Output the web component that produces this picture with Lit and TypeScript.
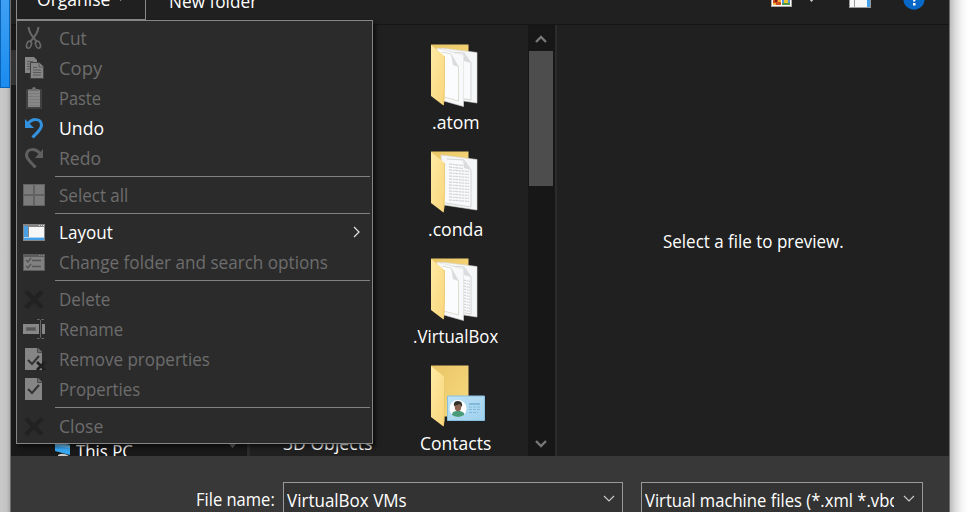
import { LitElement, html, css, svg, nothing } from "lit";
import { customElement, property } from "lit/decorators.js";

/** A single line of text condensed or widened to an exact advance width. */
@customElement("fit-text")
class FitText extends LitElement {
  @property() text = "";
  @property({ type: Number }) width = 0;
  static styles = css`
    :host { display: block; flex: none; height: 24px; line-height: 24px; white-space: pre; }
    span { display: inline-block; transform-origin: 0 50%; }
  `;
  render() { return html`<span>${this.text}</span>`; }
  updated() {
    const s = this.renderRoot.querySelector("span") as HTMLElement;
    this.style.width = this.width + "px";
    s.style.transform = `scaleX(${this.width / s.offsetWidth})`;
  }
}

const icons: Record<string, unknown> = {
  cut: svg`<g fill="none" stroke="#686868" stroke-width="1.6"><path d="M5.500 0 C6 5 8 8 14 15M15.500 0 C15 5 13 8 7 15" stroke-width="2"/><ellipse cx="6" cy="17.700" rx="2.300" ry="3.600" transform="rotate(20 6 17.700)"/><ellipse cx="15" cy="17.700" rx="2.300" ry="3.600" transform="rotate(-20 15 17.700)"/></g>`,
  copy: svg`<path d="M2 0h9l3 3v13H2z" fill="#858585"/><path d="M4 4.500h6M4 7h4M4 9.500h4M4 12h4" stroke="#5a5a5a"/><path d="M7.500 5.500h9l4 4v12h-13z" fill="#858585" stroke="#444"/><path d="M16 6v4h4M10 10.500h4M10 13h8M10 15.500h8M10 18h8" fill="none" stroke="#5a5a5a"/>`,
  paste: svg`<path d="M3 2h16v20H3z" fill="#404040"/><path d="M5 3h12v17H5z" fill="#888"/><path d="M5 6.500h12M5 9.500h12M5 12.500h12M5 15.500h12M5 18.500h12" stroke="#7b7b7b"/><path d="M6 4V2h3a2 2 0 0 1 4 0h3v2z" fill="#6d6d6d"/>`,
  undo: svg`<path d="M2 2v9h9z" fill="#3391dd"/><path d="M5 7C9 1 18 1 18.500 8C18.800 12 14 16 9.500 20.500" fill="none" stroke="#3391dd" stroke-width="3"/>`,
  redo: svg`<path d="M20 2v9h-8z" fill="#606060"/><path d="M17 7C13 1 4 1 3.500 8C3.200 12 8 15 12.500 20.500" fill="none" stroke="#606060" stroke-width="3"/>`,
  select: svg`<path d="M0 0h22v22H0z" fill="#626262"/><path d="M1 1h9v9H1zM12 1h9v9h-9zM1 12h9v9H1zM12 12h9v9h-9z" fill="#7b7b7b"/>`,
  layout: svg`<path d="M0 3h22v17H0z" fill="#858585"/><path d="M1 5h4v11H1zM1 17h20v2H1z" fill="#479fe6"/><path d="M6 6h15v10H6z" fill="#f7f7f7"/><path d="M1 16.500h20" stroke="#abd4f5"/><path d="M16 4.500h1M18 4.500h1M20 4.500h1" stroke="#ddd"/>`,
  options: svg`<path d="M0 3h22v17H0z" fill="#5b5b5b"/><path d="M1 6h20v13H1z" fill="#818181"/><path d="M3 9l2 2 3-4M3 15l2 2 3-4M9 9.500h9M9 15.500h9" fill="none" stroke="#555" stroke-width="1.400"/><path d="M16 4.500h1M18 4.500h1M20 4.500h1" stroke="#888"/>`,
  cross: svg`<path d="M3 3.500L19 19.500M19 3.500L3 19.500" stroke="#222" stroke-width="4.500"/>`,
  rename: svg`<path d="M0 6h22v10H0z" fill="#878787"/><path d="M3.500 9.500h9v3h-9z" fill="#575757" stroke="#656565"/><path d="M17.500 3v17" stroke="#2b2b2b" stroke-width="3"/><path d="M17.500 2v17M14 1.500h2.500l1 1 1-1H21M14 20.500h2.500l1-1 1 1H21" fill="none" stroke="#656565"/>`,
  remove: svg`<path d="M2 0h13l4 4v18H2z" fill="#858585"/><path d="M14.500 0v4.500H19" fill="#686868" stroke="#4a4a4a"/><path d="M5 12l4 4 7-8" fill="none" stroke="#333" stroke-width="2"/><path d="M14 14l8 8M22 14l-8 8" stroke="#202020" stroke-width="2.600"/>`,
  properties: svg`<path d="M2 0h13l4 4v18H2z" fill="#858585"/><path d="M14.500 0v4.500H19" fill="#686868" stroke="#4a4a4a"/><path d="M5 11l4 4 7-8" fill="none" stroke="#333" stroke-width="2"/>`,
};

interface Item { icon: string; text: string; w: number; on?: boolean; sub?: boolean }
const menu: (Item | null)[] = [
  { icon: "cut", text: "Cut", w: 28 },
  { icon: "copy", text: "Copy", w: 43 },
  { icon: "paste", text: "Paste", w: 42 },
  { icon: "undo", text: "Undo", w: 45, on: true },
  { icon: "redo", text: "Redo", w: 42 },
  null,
  { icon: "select", text: "Select all", w: 69 },
  null,
  { icon: "layout", text: "Layout", w: 54, on: true, sub: true },
  { icon: "options", text: "Change folder and search options", w: 269 },
  null,
  { icon: "cross", text: "Delete", w: 51 },
  { icon: "rename", text: "Rename", w: 64 },
  { icon: "remove", text: "Remove properties", w: 151 },
  { icon: "properties", text: "Properties", w: 81 },
  null,
  { icon: "cross", text: "Close", w: 44 },
];

const folders = [
  { kind: "pages", text: ".atom", w: 48 },
  { kind: "text", text: ".conda", w: 55 },
  { kind: "mixed", text: ".VirtualBox", w: 85 },
  { kind: "contact", text: "Contacts", w: 71 },
];

const lines = (x: number, y: number, w: number, n: number) =>
  Array.from({ length: n }, (_, i) =>
    svg`<path d=${`M${x} ${y + i * 3}l${w} 1.500`} stroke="#d3d6d8" stroke-width="1.300" stroke-dasharray="3 .7 2 .5"/>`);

function folder(kind: string) {
  const contact = kind === "contact";
  return html`<svg class="folder" width="56" height="64" viewBox="0 0 56 64">
    <defs>
      <linearGradient id="back" x2="1" y2="1"><stop stop-color="#e9c566"/><stop offset="1" stop-color="#f8da80"/></linearGradient>
      <linearGradient id="flap" x2="1" y2="1"><stop stop-color="#ffeaa5"/><stop offset="1" stop-color="#f9d67a"/></linearGradient>
      <linearGradient id="card" x2="1" y2="1"><stop stop-color="#bfe3f5"/><stop offset="1" stop-color="#9dd0ee"/></linearGradient>
    </defs>
    <path d="M3 .5h37.500v${contact ? 51 : 20}H3z" fill="url(#back)"/>
    ${contact ? nothing : svg`
      <path d="M13 4l36 4.500V59L16 54z" fill="#f5f6f7" stroke="#d5d5d2" stroke-width=".6"/>
      <path d="M19 8l17 1 7 10v37L17 52" fill="#f9fafb" stroke="#c9cac8" stroke-width=".8"/>
      <path d="M35 9l8 10-7-2z" fill="#d8dcdf"/>
      ${kind === "text" ? svg`${lines(21, 13, 14, 2)}${lines(21, 19, 20, 11)}` : nothing}
      ${kind === "mixed" ? lines(35, 22, 7, 11) : nothing}
      ${kind !== "text" ? svg`
        <path d="M9 4l26.500 7v51.500L16 57z" fill="#f8f9fb" stroke="#dededb" stroke-width=".6"/>
        <path d="M14 8l9 2 7.500 13v34L16 53" fill="#fbfcfd" stroke="#d8d4c5" stroke-width=".8"/>
        <path d="M23 10l7.500 13-5.500-2z" fill="#d9dcdf"/>` : nothing}`}
    <path d="M3 1l13.500 11v43L15.500 61.500 3 52z" fill="url(#flap)"/>
    <path d="M16.500 12v30L15.500 61" fill="none" stroke="#e9c66c" stroke-width=".8"/>
    ${contact ? svg`
      <path d="M19.500 31h37V55.500h-37z" fill="url(#card)" stroke="#87bfe0"/>
      <circle cx="30" cy="43.500" r="8.500" fill="#fff"/>
      <path d="M24 50q0-4 5-4h3q5 1 4 4-6 4-12 0z" fill="#4a9c78"/>
      <ellipse cx="30" cy="41.500" rx="3.300" ry="4.700" fill="#8c6551"/>
      <path d="M26 41q-1-5 4-5 5 0 4 6l-2-3z" fill="#30302d"/>
      <path d="M41 39h11" stroke="#6aa9cc" stroke-width="1.300"/>
      <path d="M41 42h11M41 44.500h11M41 47.500h9" stroke="#7fbada" stroke-dasharray="3 1"/>` : nothing}
  </svg>`;
}

const chevron = (d: string, c = "#c8c8c8", w = 1.2) =>
  html`<svg width="14" height="10" viewBox="0 0 14 10"><path d=${d} fill="none" stroke=${c} stroke-width=${w}/></svg>`;

@customElement("app-root")
class AppRoot extends LitElement {
  static styles = css`
    :host { display: block; position: relative; width: 968px; height: 512px; overflow: hidden;
      color: #fff; font: 18px "Open Sans", "Noto Sans", sans-serif; background: #fff; }
    * { box-sizing: border-box; }
    svg { display: block; flex: none; }
    .desk { display: grid; grid-template-columns: 10px 940px 18px; height: 512px; }
    .left { background: linear-gradient(90deg, #c9c9c9, #c3c3c3 65%, #acacac); }
    .tile { height: 88px; background: linear-gradient(#3fa0f3, #1a8cf0); border: 1px solid #0864b8; border-top: 0; }
    .right { background: linear-gradient(90deg, #bdbdbd, #dcdcdc 30%, #f4f4f4 65%, #fff); }
    .window { height: 512px; overflow: hidden; border: solid #6c6c6c; border-width: 0 1px; background: #202020; }
    .toolbar { display: flex; align-items: center; height: 49px; margin-top: -24px; padding: 0 24px 0 5px; border-bottom: 1px solid #151515; }
    .organise { display: flex; align-items: center; gap: 7px; width: 130px; height: 42px; margin-top: -3px; padding-left: 20px; border: 1px solid #8a8a8a; }
    .new { margin-left: 23px; margin-top: 1px; }
    .tools { display: flex; align-items: center; margin-left: auto; }
    .view { margin-right: 16px; margin-top: -2px; } .drop { margin-right: 33px; } .pane { margin-right: 32px; margin-top: -2px; }
    .body { display: grid; grid-template-columns: 236px 281px 25px 4px 1fr; height: 431px; overflow: hidden; }
    .nav { display: flex; flex-direction: column; background: #191919; }
    .mark { height: 35px; margin-top: 25px; background: #333; }
    .pc { display: flex; align-items: center; height: 24px; margin-top: auto; margin-bottom: -7px; padding: 0 10px 0 41px; gap: 4px; }
    .pc .tri { margin-left: auto; margin-top: -10px; }
    .files { display: grid; grid-template-columns: 128px 128px; padding-left: 13.5px; border-left: 3px solid #2c2c2c; height: 431px; overflow: hidden; }
    .col { display: flex; flex-direction: column; padding-top: 19px; }
    .col.first { padding-top: 406px; align-items: center; }
    .cell { display: flex; flex-direction: column; align-items: center; height: 107px; flex: none; }
    .folder { height: 64px; margin-bottom: 2px; overflow: visible; }
    .scroll { display: flex; flex-direction: column; align-items: center; background: #171717; padding: 9px 0 7px; }
    .thumb { width: 24px; height: 135px; margin-top: 7px; margin-bottom: auto; background: #4d4d4d; }
    .split { border-left: 2px solid #171717; background: #2b2b2b; }
    .preview { display: flex; align-items: center; justify-content: center; padding-left: 1px; }
    .footer { display: flex; align-items: flex-start; height: 90px; padding: 26px 0 0 185px; background: #383838; }
    .name { margin-top: 5px; margin-right: 8px; }
    .combo { display: flex; align-items: center; justify-content: space-between; height: 36px; padding: 0 6px 0 3px; border: 1px solid #999; background: #333; width: 340px; }
    .combo.type { width: 282px; margin-left: 18px; }
    .clip { width: 249px; overflow: hidden; }
    .menu { position: absolute; left: 16px; top: 20px; width: 357px; height: 424px; padding: 3px 0 1px; background: #2b2b2b; border: 1px solid #858585; box-shadow: 3px 3px 4px #0008; }
    .item { display: flex; align-items: center; height: 30px; padding: 0 10px 0 6px; color: #6d6d6d; }
    .item.on { color: #fff; }
    .item fit-text { margin-left: 12.5px; margin-top: -2px; }
    .item .arrow { margin-left: auto; margin-top: -2px; }
    .sep { height: 7px; padding: 2px 2px 0 38px; }
    .sep i { display: block; height: 1px; background: #808080; }
  `;

  render() {
    return html`<div class="desk">
      <div class="left"><div class="tile"></div></div>
      <div class="window">
        <div class="toolbar">
          <div class="organise"><fit-text text="Organise" width="73"></fit-text>
            <svg width="8" height="6"><path d="M0 1h7L3.500 5z" fill="#aaa"/></svg></div>
          <fit-text class="new" text="New folder" width="88"></fit-text>
          <div class="tools">
            <svg class="view" width="21" height="16"><path d="M0 0h21v16H0z" fill="#aaa"/><path d="M1 1h19v14H1z" fill="#fff"/><path d="M2 2h8v12H2z" fill="#d14d22"/><path d="M11 2h8v12h-8z" fill="#5293e2"/><path d="M2 12h3v2H2zM7 8h3v3H7z" fill="#f2b437"/><path d="M11 12h8v2h-8z" fill="#4a9747"/><path d="M13 9h4v3h-4z" fill="#edc82e"/><path d="M4 9h2v2H4z" fill="#7d1717"/></svg>
            <svg class="drop" width="8" height="6"><path d="M0 1h7L3.500 5z" fill="#ccc"/></svg>
            <svg class="pane" width="22" height="18"><path d="M0 0h22v18H0z" fill="#999"/><path d="M1 3h4v14H1zM6 3h12v14H6z" fill="#f7f7f7"/><path d="M18 3h3v14h-3z" fill="#429fe9"/></svg>
            <svg width="22" height="22"><circle cx="11" cy="10" r="10.700" fill="#0768c8"/><path d="M7.500 7q0-3.500 3.500-3.500T14.500 7q0 2-2 3.200Q11 11 11 12.500" fill="none" stroke="#fff" stroke-width="2"/><path d="M10 14h2.500v2.500H10z" fill="#fff"/></svg>
          </div>
        </div>
        <div class="body">
          <div class="nav">
            <div class="mark"></div>
            <div class="pc"><svg width="20" height="18"><path d="M3 0l15 3v10L3 9z" fill="#38a9f3"/><path d="M3 0l15 3v3L3 4z" fill="#70c6fa"/><path d="M6 13q5-3 11 1v4H6z" fill="#ccc"/></svg>
              <fit-text text="This PC" width="57"></fit-text>
              <svg class="tri" width="9" height="6"><path d="M0 0h9L4.500 5z" fill="#666"/></svg></div>
          </div>
          <div class="files">
            <div class="col first"><fit-text text="3D Objects" width="89"></fit-text></div>
            <div class="col">${folders.map(f => html`<div class="cell">${folder(f.kind)}<fit-text text=${f.text} width=${f.w}></fit-text></div>`)}</div>
          </div>
          <div class="scroll">
            ${chevron("M2 8l5-5 5 5", "#777", 2.4)}<div class="thumb"></div>${chevron("M2 2l5 5 5-5", "#777", 2.4)}
          </div>
          <div class="split"></div>
          <div class="preview"><fit-text text="Select a file to preview." width="181"></fit-text></div>
        </div>
        <div class="footer">
          <fit-text class="name" text="File name:" width="79"></fit-text>
          <div class="combo"><fit-text text="VirtualBox VMs" width="120"></fit-text>${chevron("M2 1l5 5 5-5")}</div>
          <div class="combo type"><div class="clip"><fit-text text="Virtual machine files (*.xml *.vbox)" width="268"></fit-text></div>${chevron("M2 1l5 5 5-5")}</div>
        </div>
      </div>
      <div class="right"></div>
    </div>
    <div class="menu">${menu.map(m => m
      ? html`<div class="item ${m.on ? "on" : ""}"><svg width="23" height="24" viewBox="0 0 23 24">${icons[m.icon]}</svg>
          <fit-text text=${m.text} width=${m.w}></fit-text>
          ${m.sub ? html`<svg class="arrow" width="10" height="14"><path d="M2 2l5 5-5 5" fill="none" stroke="#ddd" stroke-width="1.300"/></svg>` : nothing}</div>`
      : html`<div class="sep"><i></i></div>`)}</div>`;
  }
}
